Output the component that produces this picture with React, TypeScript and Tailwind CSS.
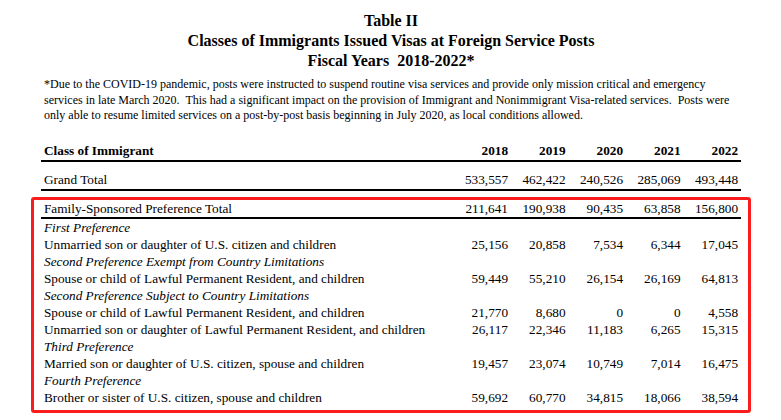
const rows: { label: string; italic?: boolean; values?: string[] }[] = [
  { label: 'First Preference', italic: true },
  { label: 'Unmarried son or daughter of U.S. citizen and children', values: ['25,156', '20,858', '7,534', '6,344', '17,045'] },
  { label: 'Second Preference Exempt from Country Limitations', italic: true },
  { label: 'Spouse or child of Lawful Permanent Resident, and children', values: ['59,449', '55,210', '26,154', '26,169', '64,813'] },
  { label: 'Second Preference Subject to Country Limitations', italic: true },
  { label: 'Spouse or child of Lawful Permanent Resident, and children', values: ['21,770', '8,680', '0', '0', '4,558'] },
  { label: 'Unmarried son or daughter of Lawful Permanent Resident, and children', values: ['26,117', '22,346', '11,183', '6,265', '15,315'] },
  { label: 'Third Preference', italic: true },
  { label: 'Married son or daughter of U.S. citizen, spouse and children', values: ['19,457', '23,074', '10,749', '7,014', '16,475'] },
  { label: 'Fourth Preference', italic: true },
  { label: 'Brother or sister of U.S. citizen, spouse and children', values: ['59,692', '60,770', '34,815', '18,066', '38,594'] },
]

const grid = 'grid grid-cols-[1fr_repeat(5,57.5px)] pr-[3px]'

function Row({ label, values, className = '', labelClass = '' }: { label: string; values?: string[]; className?: string; labelClass?: string }) {
  return (
    <div className={`${grid} ${className}`}>
      <div className={`pl-[3px] whitespace-nowrap ${labelClass}`}>{label}</div>
      {(values ?? ['', '', '', '', '']).map((v, i) => <div key={i} className="text-right">{v}</div>)}
    </div>
  )
}

export default function App() {
  return (
    <div className="w-[781px] h-[420px] bg-white text-black overflow-hidden font-['Liberation_Serif',serif]">
      <div className="ml-[41px] w-[700px]">
        <div className="pt-[11px] text-center font-bold text-[16px] leading-[20px]">
          <div>Table II</div>
          <div>Classes of Immigrants Issued Visas at Foreign Service Posts</div>
          <div className="whitespace-pre">Fiscal Years  2018-2022*</div>
        </div>
        <p className="mt-[6px] pl-[3px] text-[12px] leading-[15.5px] whitespace-pre">
          *Due to the COVID-19 pandemic, posts were instructed to suspend routine visa services and provide only mission critical and emergency{'\n'}
          services in late March 2020.  This had a significant impact on the provision of Immigrant and Nonimmigrant Visa-related services.  Posts were{'\n'}
          only able to resume limited services on a post-by-post basis beginning in July 2020, as local conditions allowed.
        </p>
        <div className="mt-[18.5px] text-[13.25px] leading-[17px]">
          <Row label="Class of Immigrant" values={['2018', '2019', '2020', '2021', '2022']} className="font-bold pb-[1px] border-b-2 border-black" />
          <Row label="Grand Total" values={['533,557', '462,422', '240,526', '285,069', '493,448']} className="mt-[9px] pb-[1px] border-b-2 border-black" />
          <div className="mt-[6px] -mx-[10px] px-[7px] pb-[4px] border-[3px] border-[#fb1d1d] rounded-[3px]">
            <Row label="Family-Sponsored Preference Total" values={['211,641', '190,938', '90,435', '63,858', '156,800']} className="border-b-2 border-black" />
            {rows.map((r, i) => (
              <Row key={i} label={r.label} values={r.values} labelClass={r.italic ? 'italic' : ''} />
            ))}
          </div>
        </div>
      </div>
    </div>
  )
}
